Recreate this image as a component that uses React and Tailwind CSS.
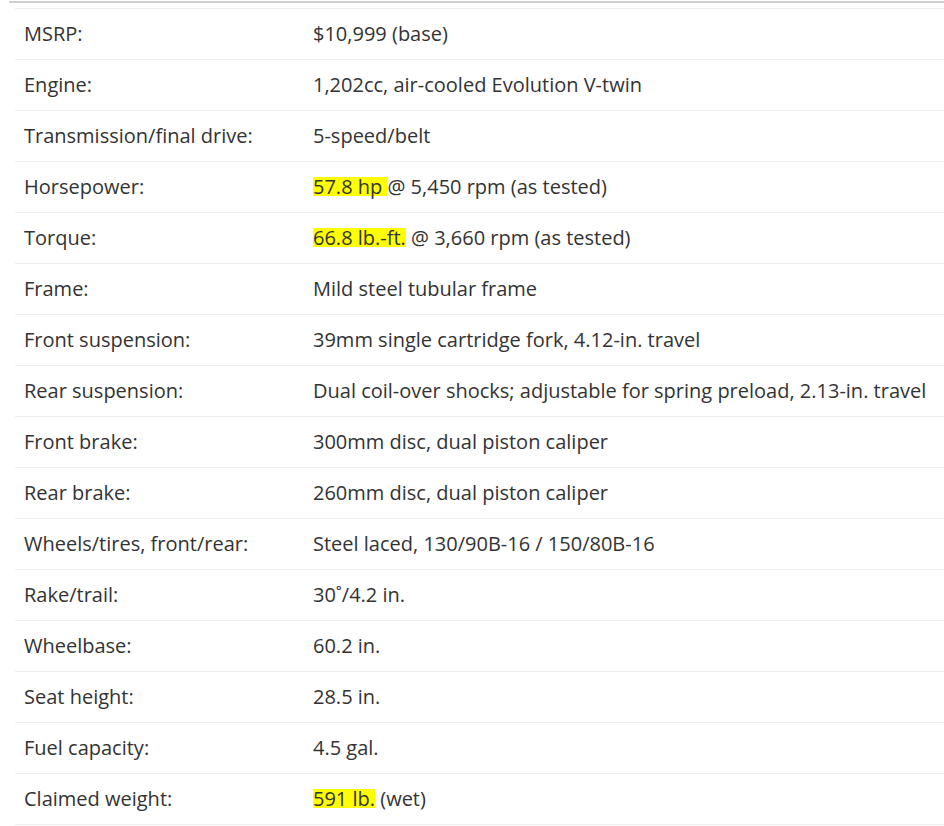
// App.jsx

const specs = [
  { label: "MSRP:", value: "$10,999 (base)" },
  { label: "Engine:", value: "1,202cc, air-cooled Evolution V-twin" },
  { label: "Transmission/final drive:", value: "5-speed/belt" },
  { label: "Horsepower:", mark: "57.8 hp ", value: "@ 5,450 rpm (as tested)" },
  { label: "Torque:", mark: "66.8 lb.-ft.", value: " @ 3,660 rpm (as tested)" },
  { label: "Frame:", value: "Mild steel tubular frame" },
  { label: "Front suspension:", value: "39mm single cartridge fork, 4.12-in. travel" },
  {
    label: "Rear suspension:",
    value: "Dual coil-over shocks; adjustable for spring preload, 2.13-in. travel",
  },
  { label: "Front brake:", value: "300mm disc, dual piston caliper" },
  { label: "Rear brake:", value: "260mm disc, dual piston caliper" },
  { label: "Wheels/tires, front/rear:", value: "Steel laced, 130/90B-16 / 150/80B-16" },
  { label: "Rake/trail:", value: "30˚/4.2 in." },
  { label: "Wheelbase:", value: "60.2 in." },
  { label: "Seat height:", value: "28.5 in." },
  { label: "Fuel capacity:", value: "4.5 gal." },
  { label: "Claimed weight:", mark: "591 lb.", value: " (wet)" },
];

export default function App() {
  return (
    <div className="h-[826px] w-full overflow-hidden bg-white font-['Open_Sans',sans-serif] text-[20px] text-[#333]">
      <div className="ml-[9px] mt-px border-t-2 border-[#cfcfcf]" />
      <div className="ml-[15px] mt-[5px] border-b border-[#eee]">
        {specs.map(({ label, mark, value }) => (
          <div
            key={label}
            className="grid h-[51px] grid-cols-[298px_1fr] items-center border-t border-[#eee] whitespace-nowrap"
          >
            <div className="pl-[9px]">{label}</div>
            <div>
              {mark && (
                <span className="inline-block bg-[#ffff00] leading-[19px] whitespace-pre">
                  {mark}
                </span>
              )}
              <span className="whitespace-pre">{value}</span>
            </div>
          </div>
        ))}
      </div>
    </div>
  );
}
